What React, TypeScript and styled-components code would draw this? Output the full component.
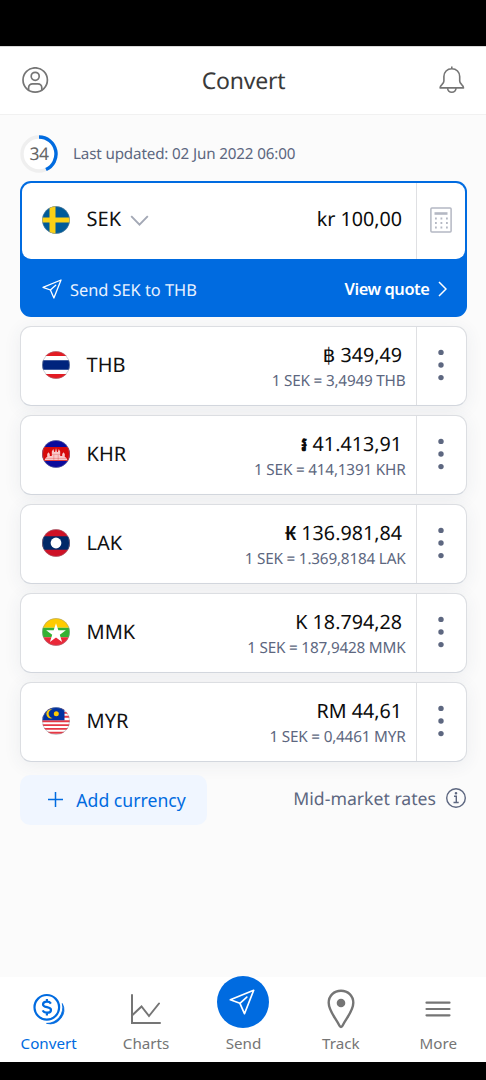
import React from 'react';
import styled, { createGlobalStyle } from 'styled-components';

const BLUE = '#006be0';
const SLATE = '#5d6780';
const GREY = '#757575';

const GlobalStyle = createGlobalStyle`
  *, *::before, *::after { box-sizing: border-box; }
  body {
    margin: 0;
    background: #000;
    font-family: 'Noto Sans', 'Open Sans', sans-serif;
    text-rendering: geometricPrecision;
  }
  button { font: inherit; color: inherit; background: none; border: 0; padding: 0; margin: 0; }
  svg { display: block; flex: none; }
`;

const Screen = styled.div`
  display: flex;
  flex-direction: column;
  width: 486px;
  height: 1080px;
  padding: 46px 0 18px;
  background: #000;
  overflow: hidden;
`;

const Header = styled.header`
  display: grid;
  grid-template-columns: 27px 1fr 27px;
  align-items: center;
  height: 69px;
  padding: 0 21px 1px 22px;
  background: #fff;
  border-top: 1px solid #d8d8d8;
  border-bottom: 1px solid #f1f1f1;
`;

const Title = styled.h1`
  margin: 0;
  font-size: 23px;
  font-weight: 400;
  line-height: 30px;
  letter-spacing: -0.25px;
  text-align: center;
  color: #3a3a3a;
`;

const Main = styled.main`
  flex: 1;
  padding: 20px 19px 0 20px;
  background: #fbfbfb;
`;

const Status = styled.div`
  display: flex;
  align-items: center;
  height: 38px;
  gap: 15px;
  margin-bottom: 8px;
  font-size: 15.2px;
  letter-spacing: -0.15px;
  color: ${SLATE};
`;

const Countdown = styled.div`
  display: grid;
  width: 38px;
  height: 38px;
  place-items: center;
  & > * { grid-area: 1 / 1; }
  span { font-size: 17.5px; letter-spacing: -0.4px; color: #666; }
`;

const BaseCard = styled.section`
  height: 136px;
  margin-bottom: 9px;
  padding: 2px;
  border-radius: 11px;
  background: ${BLUE};
`;

const BaseRow = styled.div`
  display: flex;
  height: 76px;
  border-radius: 9px;
  background: #fff;
`;

const QuoteRow = styled.div`
  display: flex;
  align-items: center;
  justify-content: space-between;
  height: 59px;
  padding: 1px 18px 0 20px;
  color: #fff;
  font-size: 16.4px;
`;

const QuoteLabel = styled.span`
  display: flex;
  align-items: center;
  gap: 8px;
  letter-spacing: -0.03px;
  color: #e9f2ff;
`;

const QuoteLink = styled.button`
  display: flex;
  align-items: center;
  gap: 8.5px;
  padding-bottom: 1px;
  font-weight: 600;
  letter-spacing: -0.42px;
`;

const Rows = styled.div`
  display: flex;
  flex-direction: column;
  gap: 9.1px;
`;

const Card = styled.article`
  display: flex;
  height: 80px;
  border: 1px solid #dcdee2;
  border-bottom-color: #d3d7de;
  border-radius: 11px;
  background: #fff;
  box-shadow: 0 3px 18px rgba(60, 70, 90, 0.075);
`;

const Currency = styled.div<{ $base?: boolean }>`
  display: flex;
  align-items: center;
  flex: 1;
  padding-left: ${p => (p.$base ? 19.3 : 20.3)}px;
  padding-bottom: ${p => (p.$base ? 3 : 2)}px;
  font-size: 20px;
  color: #111;
`;

const Code = styled.span`
  margin-left: 15.3px;
  padding-bottom: 2px;
`;

const Chevron = styled.svg`
  margin: 2px 0 0 8.5px;
`;

const Values = styled.div<{ $base?: boolean }>`
  display: flex;
  flex-direction: column;
  align-items: flex-end;
  justify-content: center;
  padding: ${p => (p.$base ? '0 10px 4px 0' : '1.2px 10px 0 0')};
`;

const Amount = styled.div`
  padding-right: 4px;
  font-size: 19.7px;
  line-height: 28px;
  white-space: pre;
  color: #0c0c0c;
`;

const Sign = styled.span<{ $heavy?: boolean }>`
  font-weight: ${p => (p.$heavy ? 600 : 400)};
`;

const Rate = styled.div`
  margin-right: 0.5px;
  font-size: 15.3px;
  line-height: 24px;
  letter-spacing: -0.2px;
  color: ${SLATE};
`;

const Side = styled.button<{ $width: number }>`
  display: flex;
  align-items: center;
  justify-content: center;
  width: ${p => p.$width}px;
  padding: 0 1px 3px 0;
  border-left: 1px solid #dfe0e3;
`;

const Footer = styled.div`
  display: flex;
  justify-content: space-between;
  margin-top: 12.5px;
  font-size: 17.65px;
`;

const AddButton = styled.button`
  display: flex;
  align-items: center;
  gap: 13px;
  width: 187px;
  height: 50px;
  padding-left: 28.3px;
  border-radius: 10px;
  background: #f0f6ff;
  color: ${BLUE};
`;

const MidMarket = styled.div`
  display: flex;
  align-items: center;
  gap: 9px;
  height: 48px;
  color: ${SLATE};
  svg { margin-bottom: 1px; }
`;

const Nav = styled.nav`
  display: grid;
  grid-template-columns: repeat(5, 97.4px);
  grid-template-rows: 85px;
  background: #fff;
`;

const NavItem = styled.button<{ $active?: boolean }>`
  display: flex;
  flex-direction: column;
  align-items: center;
  justify-content: flex-end;
  padding-bottom: 7px;
  font-size: 15.2px;
  line-height: 24px;
  color: ${p => (p.$active ? BLUE : GREY)};
`;

const IconSlot = styled.span`
  display: flex;
  align-items: center;
  justify-content: center;
  height: 44px;
`;

const SendDisc = styled.span`
  display: flex;
  flex: none;
  align-items: center;
  justify-content: center;
  width: 52px;
  height: 52px;
  margin-bottom: 3px;
  padding: 0 3px 0 0;
  border-radius: 50%;
  background: ${BLUE};
`;

const Plane = ({ size }: { size: number }) => (
  <svg width={size} height={size} viewBox="0 0 20 20" fill="none" stroke="#fff" strokeWidth="1.3" strokeLinejoin="round" strokeLinecap="round">
    <path d="M1 8.3 19 1 11.9 19 8.4 11Z" />
    <path d="M8.4 11 13.7 6.2" />
  </svg>
);

type CurrencyCode = 'SEK' | 'THB' | 'KHR' | 'LAK' | 'MMK' | 'MYR';

const flags: Record<CurrencyCode, React.ReactNode> = {
  SEK: (
    <>
      <path fill="#005b99" d="M0 0h28v28H0z" />
      <path fill="#fcd116" d="M7.5 0h6v28h-6zM0 11.5h28v5H0z" />
    </>
  ),
  THB: (
    <>
      <path fill="#fff" d="M0 0h28v28H0z" />
      <path fill="#e31b23" d="M0 0h28v5H0zM0 23h28v5H0z" />
      <path fill="#00247d" d="M0 9.3h28v9.4H0z" />
    </>
  ),
  KHR: (
    <>
      <path fill="#0b0b9c" d="M0 0h28v28H0z" />
      <path fill="#d60a0a" d="M0 7h28v14H0z" />
      <path fill="#f8c9c9" d="M2.5 20.3 4 17.5 5.2 17V14l1.3-1.7L7.8 14v2h2v-4.5L11.3 9l1 3h.8L14 8l1 4h.8l1-3 1.4 2.5V16h2v-2l1.3-1.7 1.3 1.7v3l1.2.5 1.5 2.8z" />
      <path stroke="#d60a0a" strokeOpacity=".6" strokeWidth=".4" d="M4 18.4h20M9.5 14.4h9M11.8 15v5M16.2 15v5" />
    </>
  ),
  LAK: (
    <>
      <path fill="#ce1126" d="M0 0h28v28H0z" />
      <path fill="#002868" d="M0 7.3h28v13.4H0z" />
      <circle cx="14" cy="14" r="5.4" fill="#fff" />
    </>
  ),
  MMK: (
    <>
      <path fill="#fecb00" d="M0 0h28v9.7H0z" />
      <path fill="#34b233" d="M0 9.7h28v9.6H0z" />
      <path fill="#ea2839" d="M0 19.3h28V28H0z" />
      <path fill="#fff" d="m14 5.2 2.35 7.1 7.5.05-6.05 4.4 2.27 7.15L14 19.5l-6.07 4.4 2.27-7.15-6.05-4.4 7.5-.05z" />
    </>
  ),
  MYR: (
    <>
      <path fill="#fff" d="M0 0h28v28H0z" />
      <path stroke="#e63946" strokeWidth="1.9" d="M0 2h28M0 5.9h28M0 9.8h28M0 14.3h28M0 18.1h28M0 21.9h28M0 25.7h28" />
      <path fill="#0032a0" d="M0 0h22.5v13.2H0z" />
      <path fill="#fc0" d="M10.8 2.6a4.6 4.6 0 1 0 0 8.4 4.2 4.2 0 1 1 0-8.4z" />
      <circle cx="14.3" cy="6.8" r="2.5" fill="#fc0" />
    </>
  ),
};

const Flag = ({ code }: { code: CurrencyCode }) => (
  <svg width="30" height="30" viewBox="-1 -1 30 30">
    <defs>
      <clipPath id={`disc-${code}`}>
        <circle cx="14" cy="14" r="13.8" />
      </clipPath>
    </defs>
    <g clipPath={`url(#disc-${code})`}>{flags[code]}</g>
    <circle cx="14" cy="14" r="13.6" fill="none" stroke="#8d929c" strokeOpacity=".55" strokeWidth=".8" />
  </svg>
);

const rows: { code: CurrencyCode; sign: string; heavy?: boolean; amount: string; rate: string }[] = [
  { code: 'THB', sign: '฿', amount: '349,49', rate: '1 SEK = 3,4949 THB' },
  { code: 'KHR', sign: '៛', heavy: true, amount: '41.413,91', rate: '1 SEK = 414,1391 KHR' },
  { code: 'LAK', sign: '₭', heavy: true, amount: '136.981,84', rate: '1 SEK = 1.369,8184 LAK' },
  { code: 'MMK', sign: 'K', amount: '18.794,28', rate: '1 SEK = 187,9428 MMK' },
  { code: 'MYR', sign: 'RM', amount: '44,61', rate: '1 SEK = 0,4461 MYR' },
];

export default function App() {
  return (
    <Screen>
      <GlobalStyle />
      <Header>
        <svg width="27" height="27" viewBox="0 0 27 27" fill="none" stroke={GREY} strokeWidth="1.7">
          <circle cx="13.2" cy="13" r="12.2" />
          <circle cx="13.2" cy="9.3" r="4" />
          <path d="M6.6 23v-2.2a4 4 0 0 1 4-4h5.2a4 4 0 0 1 4 4V23" />
        </svg>
        <Title>Convert</Title>
        <svg width="27" height="29" viewBox="0 0.5 27 29" fill="none" stroke={GREY} strokeWidth="1.6" strokeLinejoin="round">
          <path d="M13.8 1v2.5M13.8 3.2c-4.7 0-7.9 3.4-7.9 7.8v4.6c0 1.6-.9 2.4-2 3.5-1.1 1-1.8 1.5-1.8 3.3h23.4c0-1.8-.7-2.3-1.8-3.3-1.1-1.1-2-1.9-2-3.5V11c0-4.4-3.2-7.8-7.9-7.8Z" />
          <path d="M9.6 22.6a4.2 4.2 0 0 0 8.4 0" />
        </svg>
      </Header>
      <Main>
        <Status>
          <Countdown>
            <svg width="38" height="38" viewBox="0 0 38 38" fill="none" strokeWidth="3.4">
              <circle cx="19" cy="19" r="17" fill="#fff" stroke="#efefef" />
              <path d="M19 2a17 17 0 0 1 7 32.5" stroke={BLUE} />
            </svg>
            <span>34</span>
          </Countdown>
          <span>Last updated: 02 Jun 2022 06:00</span>
        </Status>
        <BaseCard>
          <BaseRow>
            <Currency $base>
              <Flag code="SEK" />
              <Code>SEK</Code>
              <Chevron width="19" height="12" viewBox="0 0 19 12" fill="none" stroke="#a3a8b5" strokeWidth="1.9">
                <path d="m1.2 1.2 8.3 8.5 8.3-8.5" />
              </Chevron>
            </Currency>
            <Values $base>
              <Amount>kr 100,00</Amount>
            </Values>
            <Side $width={49}>
              <svg width="22" height="26" viewBox="0 0 22 26" fill="none" stroke="#b4b8c3">
                <rect x=".9" y=".9" width="20.2" height="24.2" rx="1" strokeWidth="1.5" />
                <path d="M4.5 6.5h13" strokeWidth="2.6" />
                <path d="M5 11.5h13M5 16h13M5 20.5h13" strokeWidth="1.8" strokeDasharray="1.8 3.7" />
              </svg>
            </Side>
          </BaseRow>
          <QuoteRow>
            <QuoteLabel>
              <Plane size={20} />
              Send SEK to THB
            </QuoteLabel>
            <QuoteLink>
              View quote
              <svg width="9" height="16" viewBox="0 0 9 16" fill="none" stroke="#fff" strokeWidth="1.5">
                <path d="m1 1 7 7-7 7" />
              </svg>
            </QuoteLink>
          </QuoteRow>
        </BaseCard>
        <Rows>
          {rows.map(r => (
            <Card key={r.code}>
              <Currency>
                <Flag code={r.code} />
                <Code>{r.code}</Code>
              </Currency>
              <Values>
                <Amount>
                  <Sign $heavy={r.heavy}>{r.sign}</Sign> {r.amount}
                </Amount>
                <Rate>{r.rate}</Rate>
              </Values>
              <Side $width={50}>
                <svg width="6" height="32" viewBox="0 0 6 32" fill={SLATE}>
                  <circle cx="3" cy="3.4" r="2.7" />
                  <circle cx="3" cy="16" r="2.7" />
                  <circle cx="3" cy="28.6" r="2.7" />
                </svg>
              </Side>
            </Card>
          ))}
        </Rows>
        <Footer>
          <AddButton>
            <svg width="15" height="15" viewBox="0 0 15 15" stroke={BLUE} strokeWidth="1.5">
              <path d="M7.5 0v15M0 7.5h15" />
            </svg>
            Add currency
          </AddButton>
          <MidMarket>
            Mid-market rates
            <svg width="22" height="22" viewBox="0 0 22 22" fill="none" stroke={SLATE} strokeWidth="1.4">
              <circle cx="11" cy="11" r="9.3" />
              <path d="M9 9.3h2.3v6.2M8.5 15.5h5.2" />
              <circle cx="11" cy="6.3" r=".6" fill={SLATE} />
            </svg>
          </MidMarket>
        </Footer>
      </Main>
      <Nav>
        <NavItem $active>
          <IconSlot>
            <svg width="32" height="32" viewBox="0 0 32 32" fill="none" stroke={BLUE} strokeWidth="2.2">
              <circle cx="13.8" cy="14.3" r="12.3" />
              <path d="M29.3 10.5A14 14 0 0 1 13.5 30.4 16 16 0 0 0 29.3 10.5Z" fill={BLUE} strokeWidth=".8" strokeLinejoin="round" />
              <path d="M17.9 10.6c-.8-1.3-2.2-1.9-4-1.9-2.3 0-3.9 1-3.9 2.7 0 3.7 8 1.8 8 5.5 0 1.8-1.7 2.8-4 2.8-2 0-3.6-.8-4.3-2.3M13.9 6v3M13.9 19.5v3" />
            </svg>
          </IconSlot>
          Convert
        </NavItem>
        <NavItem>
          <IconSlot>
            <svg width="32" height="32" viewBox="0 0 32 32" fill="none" stroke={GREY} strokeWidth="2" strokeLinecap="round">
              <path d="M2 2v28h28M2.5 22l9-8.5 7.5 9.5 10-12.5" />
            </svg>
          </IconSlot>
          Charts
        </NavItem>
        <NavItem>
          <SendDisc>
            <Plane size={26} />
          </SendDisc>
          Send
        </NavItem>
        <NavItem>
          <IconSlot>
            <svg width="28" height="40" viewBox="0 0 28 40" fill="none" stroke={GREY} strokeWidth="2.4">
              <path d="M14 1.7C7 1.7 1.7 6.8 1.7 13.8c0 8.2 6.5 14.5 10.8 23 .7 1.5 2.3 1.5 3 0 4.3-8.5 10.8-14.8 10.8-23C26.3 6.8 21 1.7 14 1.7Z" />
              <circle cx="14" cy="14" r="4.3" fill={GREY} stroke="none" />
            </svg>
          </IconSlot>
          Track
        </NavItem>
        <NavItem>
          <IconSlot>
            <svg width="26" height="18" viewBox="0 0 26 18" fill="none" stroke={GREY} strokeWidth="2.2" strokeLinecap="round">
              <path d="M1.5 2.7h23M1.5 9h23M1.5 15.3h23" />
            </svg>
          </IconSlot>
          More
        </NavItem>
      </Nav>
    </Screen>
  );
}
